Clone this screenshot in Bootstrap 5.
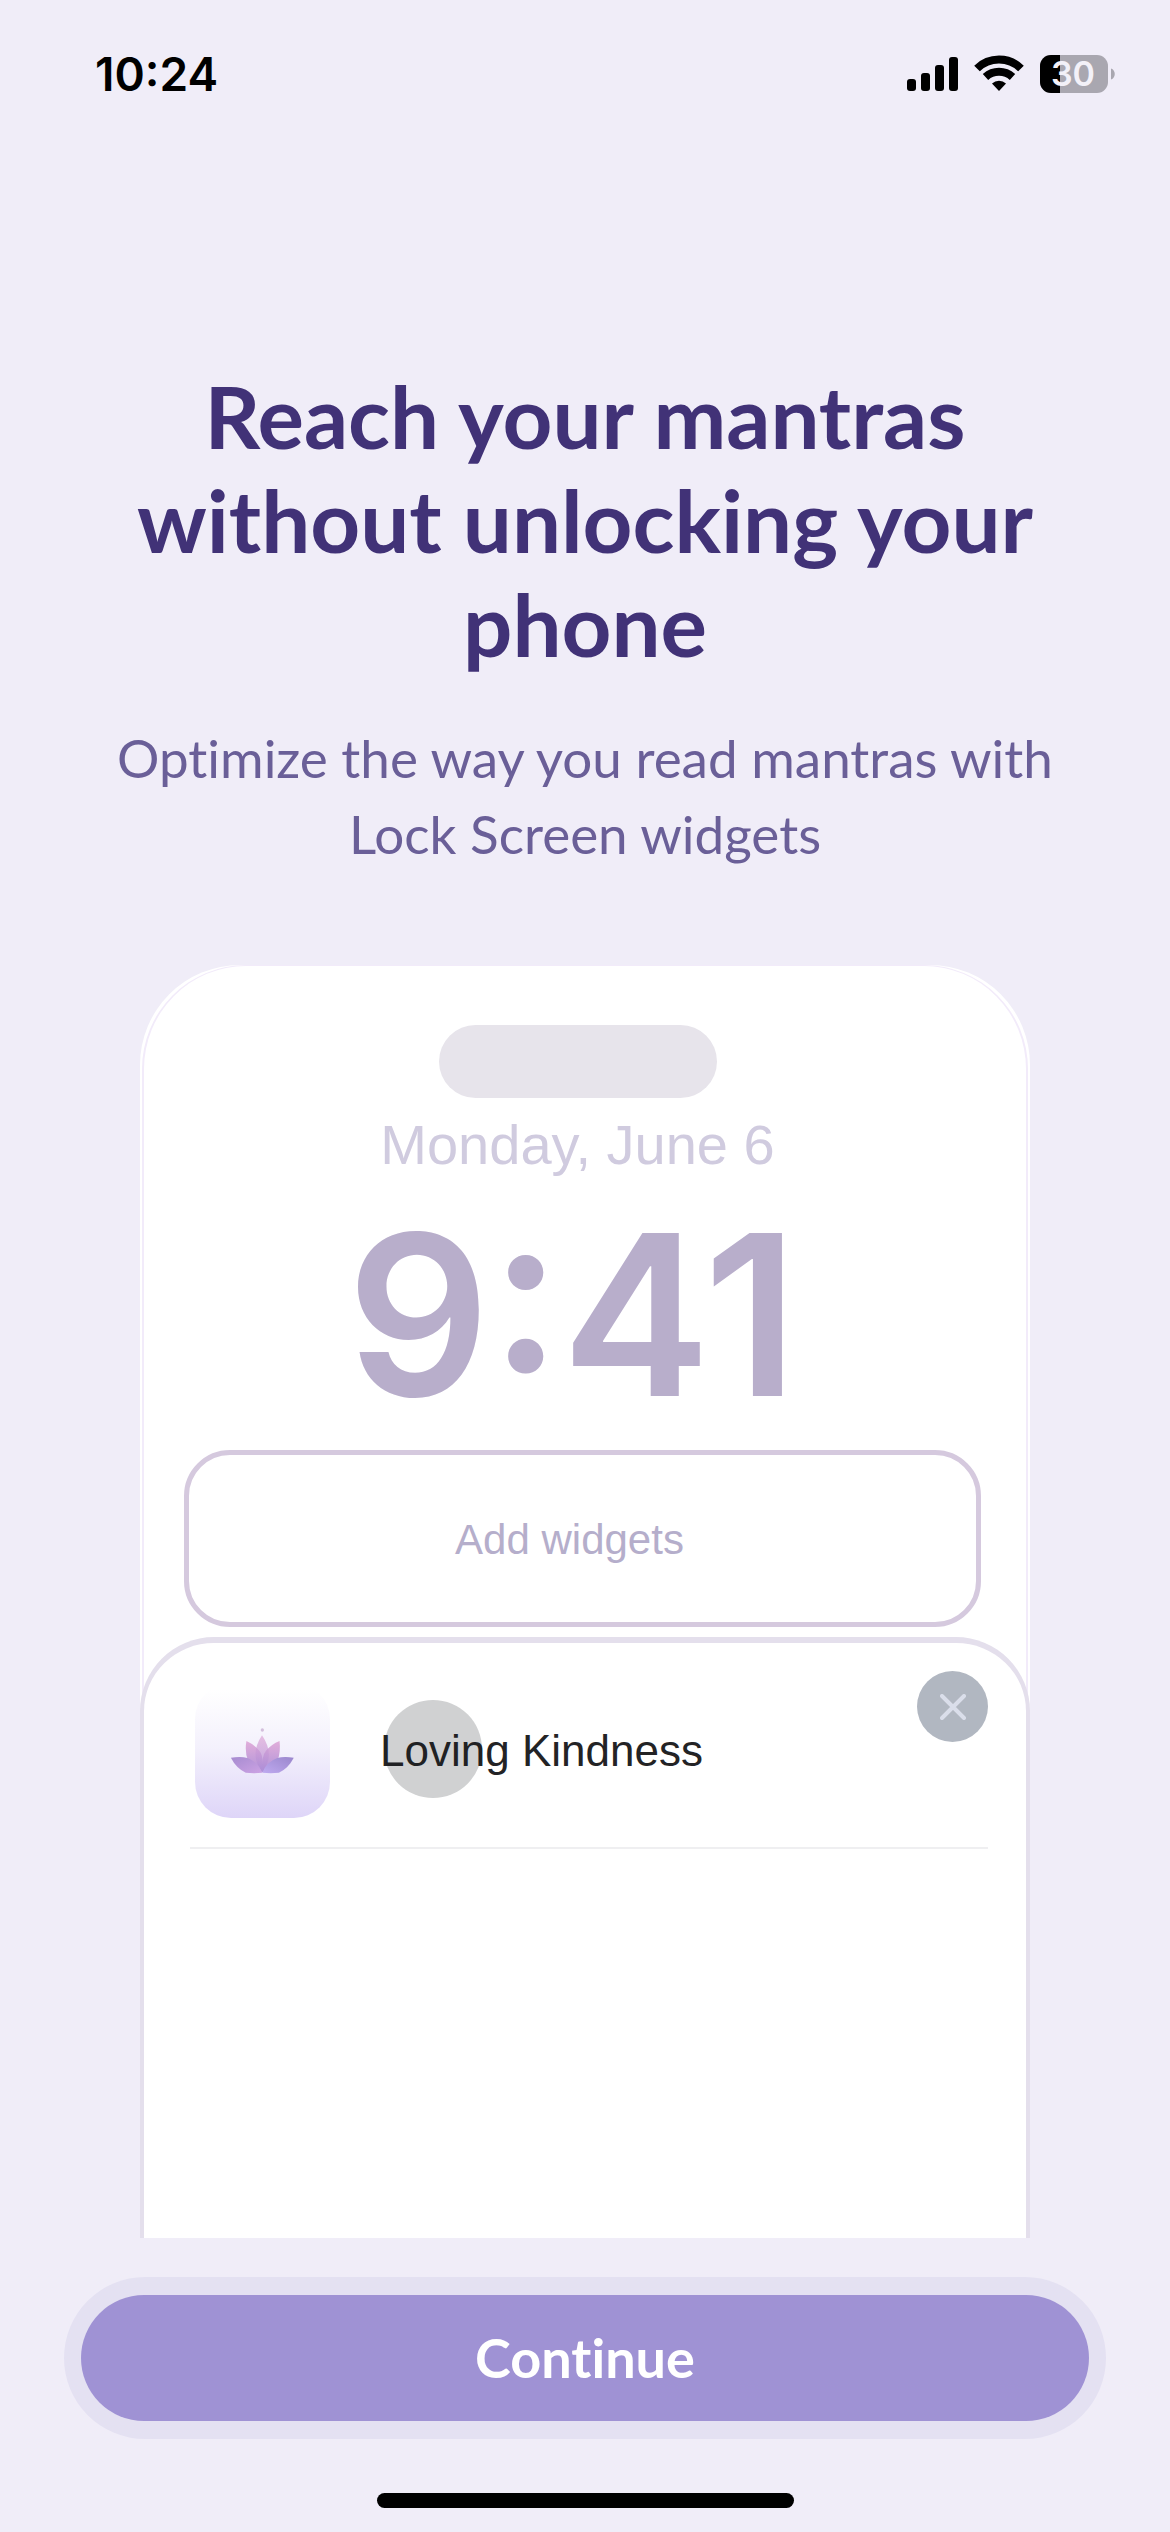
<!DOCTYPE html>
<html lang="en">
<head>
<meta charset="utf-8">
<meta name="viewport" content="width=device-width, initial-scale=1">
<title>Lock Screen widgets</title>
<link rel="stylesheet" href="https://cdn.jsdelivr.net/npm/bootstrap@5.3.0/dist/css/bootstrap.min.css">
<style>
  body { background: #f0edf8; font-family: Lato, sans-serif; }
  .headline, .subline, .btn-go { font-variant-ligatures: none; }
  .status { padding: 46px 54px 0 95px; font-family: Inter, sans-serif; color: #000; }
  .clock { font-size: 46px; line-height: 56px; font-weight: 600; }
  .intro { padding: 262px 100px 0; }
  .headline { font-size: 87px; line-height: 104px; font-weight: 700; color: #413277; margin-bottom: 44px; }
  .subline { font-size: 53px; line-height: 76px; color: #6a5f98; margin-bottom: 93px; }
  .phone-wrap { padding: 0 140px; }
  .phone { background: #fff; border-radius: 100px 100px 0 0; padding-top: 60px; font-family: "Liberation Sans", sans-serif; position: relative; }
  .phone::before { content: ""; position: absolute; inset: 0 2px; border: 2px solid #f2ebfa; border-top-width: 1px; border-bottom: 0; border-radius: 104px 104px 0 0; }
  .lockface { padding: 0 49px 0 44px; }
  .island { width: 278px; height: 73px; background: #e7e4eb; margin-right: 10px; }
  .lock-date { font-size: 56px; line-height: 64px; color: #d0cbdf; margin: 15px 10px 23px 0; }
  .lock-time { font-family: Inter, sans-serif; font-size: 224px; line-height: 230px; font-weight: 600; color: #b8aecb; margin-right: 20px; margin-bottom: 20px; }
  .widget-slot { border: 5px solid #d5c9de; border-radius: 46px; height: 177px; background: #fff; color: #b5aecb; font-size: 42px; line-height: 50px; padding: 2px 26px 0 0; }
  .sheet { position: relative; background: #fff; border: 4px solid #e4dfec; border-top-width: 6px; border-bottom: 0; border-radius: 74px 74px 0 0; margin-top: 10px; padding: 28px 38px 0 46px; }
  .mantra-row { border-bottom: 2px solid #efeff1; padding-bottom: 29px; }
  .mantra { margin: 12px 0 0 5px; gap: 50px; font-size: 44px; line-height: 56px; color: #232325; }
  .tile { width: 135px; height: 135px; border-radius: 36px; background: linear-gradient(#fff 5%, #f3f0fc 50%, #ded5f8); }
  .touch { position: absolute; left: 4px; top: 50%; width: 98px; height: 98px; margin-top: -51px; background: rgba(20, 25, 28, .2); }
  .close-btn { width: 71px; height: 71px; background: #b1b7c1; }
  .actions { padding: 39px 64px 54px; }
  .btn-go, .btn-go:hover { width: 100%; background: #9f92d4; color: #fff; border: 0; font-size: 54px; line-height: 62px; font-weight: 700; padding: 32px 0; }
  .halo { background: #e4e1f2; padding: 18px 17px; }
  .home-bar { width: 417px; height: 15px; background: #000; margin-bottom: 24px; }
</style>
<script src="https://cdn.jsdelivr.net/npm/bootstrap@5.3.0/dist/js/bootstrap.bundle.min.js"></script>
</head>
<body class="d-flex flex-column min-vh-100">
  <header class="status d-flex justify-content-between align-items-center">
    <span class="clock">10:24</span>
    <svg width="209" height="50" viewBox="0 -6 209 50" role="img" aria-label="Signal, Wi-Fi, battery 30 percent">
      <rect x="0" y="24" width="9" height="12" rx="3"/>
      <rect x="14" y="18" width="9" height="18" rx="3"/>
      <rect x="28" y="10" width="9" height="26" rx="3"/>
      <rect x="42" y="2" width="9" height="34" rx="3"/>
      <g fill="none" stroke="#000">
        <path d="M70 13.500a31.500 31.500 0 0 1 44 0" stroke-width="8"/>
        <path d="M78.500 22a20 20 0 0 1 27 0" stroke-width="8"/>
      </g>
      <path d="M92 36l-7-7.500a10.500 10.500 0 0 1 14 0z"/>
      <clipPath id="cell"><rect x="133" y="0" width="68" height="38" rx="11"/></clipPath>
      <g clip-path="url(#cell)">
        <rect x="133" width="68" height="38" fill="#a9a7b0"/>
        <rect x="133" width="20" height="38"/>
      </g>
      <path d="M204 13.500c5 1.500 5 9.500 0 11z" fill="#a9a7b0"/>
      <text x="166" y="31" text-anchor="middle" font-family="Inter, sans-serif" font-size="34" font-weight="600" fill="#f3f1f8">30</text>
    </svg>
  </header>

  <main class="d-flex flex-column flex-grow-1">
    <section class="intro text-center">
      <h1 class="headline">Reach your mantras without unlocking your phone</h1>
      <p class="subline">Optimize the way you read mantras with Lock Screen widgets</p>
    </section>

    <section class="phone-wrap d-flex flex-column flex-grow-1">
      <div class="phone d-flex flex-column flex-grow-1">
        <div class="lockface d-flex flex-column align-items-center">
          <div class="island rounded-pill"></div>
          <div class="lock-date">Monday, June 6</div>
          <div class="lock-time">9:41</div>
          <button type="button" class="widget-slot w-100">Add widgets</button>
        </div>
        <div class="sheet flex-grow-1">
          <div class="mantra-row d-flex justify-content-between align-items-start">
            <div class="mantra d-flex align-items-center">
              <div class="tile d-flex align-items-center justify-content-center">
                <svg width="65" height="47" viewBox="150 170 195 142" aria-hidden="true">
                  <defs>
                    <linearGradient id="pink" x1="0" y1="0" x2="0" y2="1"><stop offset="0" stop-color="#dfa6d6"/><stop offset="1" stop-color="#a98ad6"/></linearGradient>
                    <linearGradient id="outL" x1="0" y1="0" x2="1" y2="1"><stop offset="0" stop-color="#a68bd0"/><stop offset="1" stop-color="#cda3e4"/></linearGradient>
                    <linearGradient id="outR" x1="1" y1="0" x2="0" y2="1"><stop offset="0" stop-color="#9a86cc"/><stop offset="1" stop-color="#bfaaf0"/></linearGradient>
                  </defs>
                  <circle cx="247" cy="179" r="5" fill="#d3bfdc"/>
                  <path d="M199 212q-6 32 5 60q18 22 43 35q5-50-9-65q-16-20-39-30z" fill="url(#pink)" opacity=".9"/>
                  <path d="M299 212q4 32-6 60q-20 22-46 35q-3-50 11-65q16-20 41-30z" fill="url(#pink)" opacity=".9"/>
                  <path d="M246 195q-40 60 1 112q40-52-1-112z" fill="url(#pink)" opacity=".7"/>
                  <path d="M152 263q30-5 50 1q32 12 45 44q-26 3-50 0q-28-12-45-45z" fill="url(#outL)"/>
                  <path d="M342 263q-30-5-50 1q-32 12-45 44q26 3 50 0q28-12 45-45z" fill="url(#outR)"/>
                </svg>
              </div>
              <div class="position-relative">Loving Kindness<span class="touch rounded-circle"></span></div>
            </div>
            <button type="button" class="close-btn btn p-0 rounded-circle d-flex align-items-center justify-content-center" aria-label="Close">
              <svg width="26" height="26" viewBox="0 0 26 26" fill="none" stroke="#dadeea" stroke-width="4" stroke-linecap="round"><path d="M2 2l22 22M24 2L2 24"/></svg>
            </button>
          </div>
        </div>
      </div>
    </section>
  </main>

  <footer class="d-flex flex-column align-items-center">
    <div class="actions w-100">
      <div class="halo rounded-pill"><button type="button" class="btn btn-go rounded-pill">Continue</button></div>
    </div>
    <div class="home-bar rounded-pill"></div>
  </footer>
</body>
</html>
